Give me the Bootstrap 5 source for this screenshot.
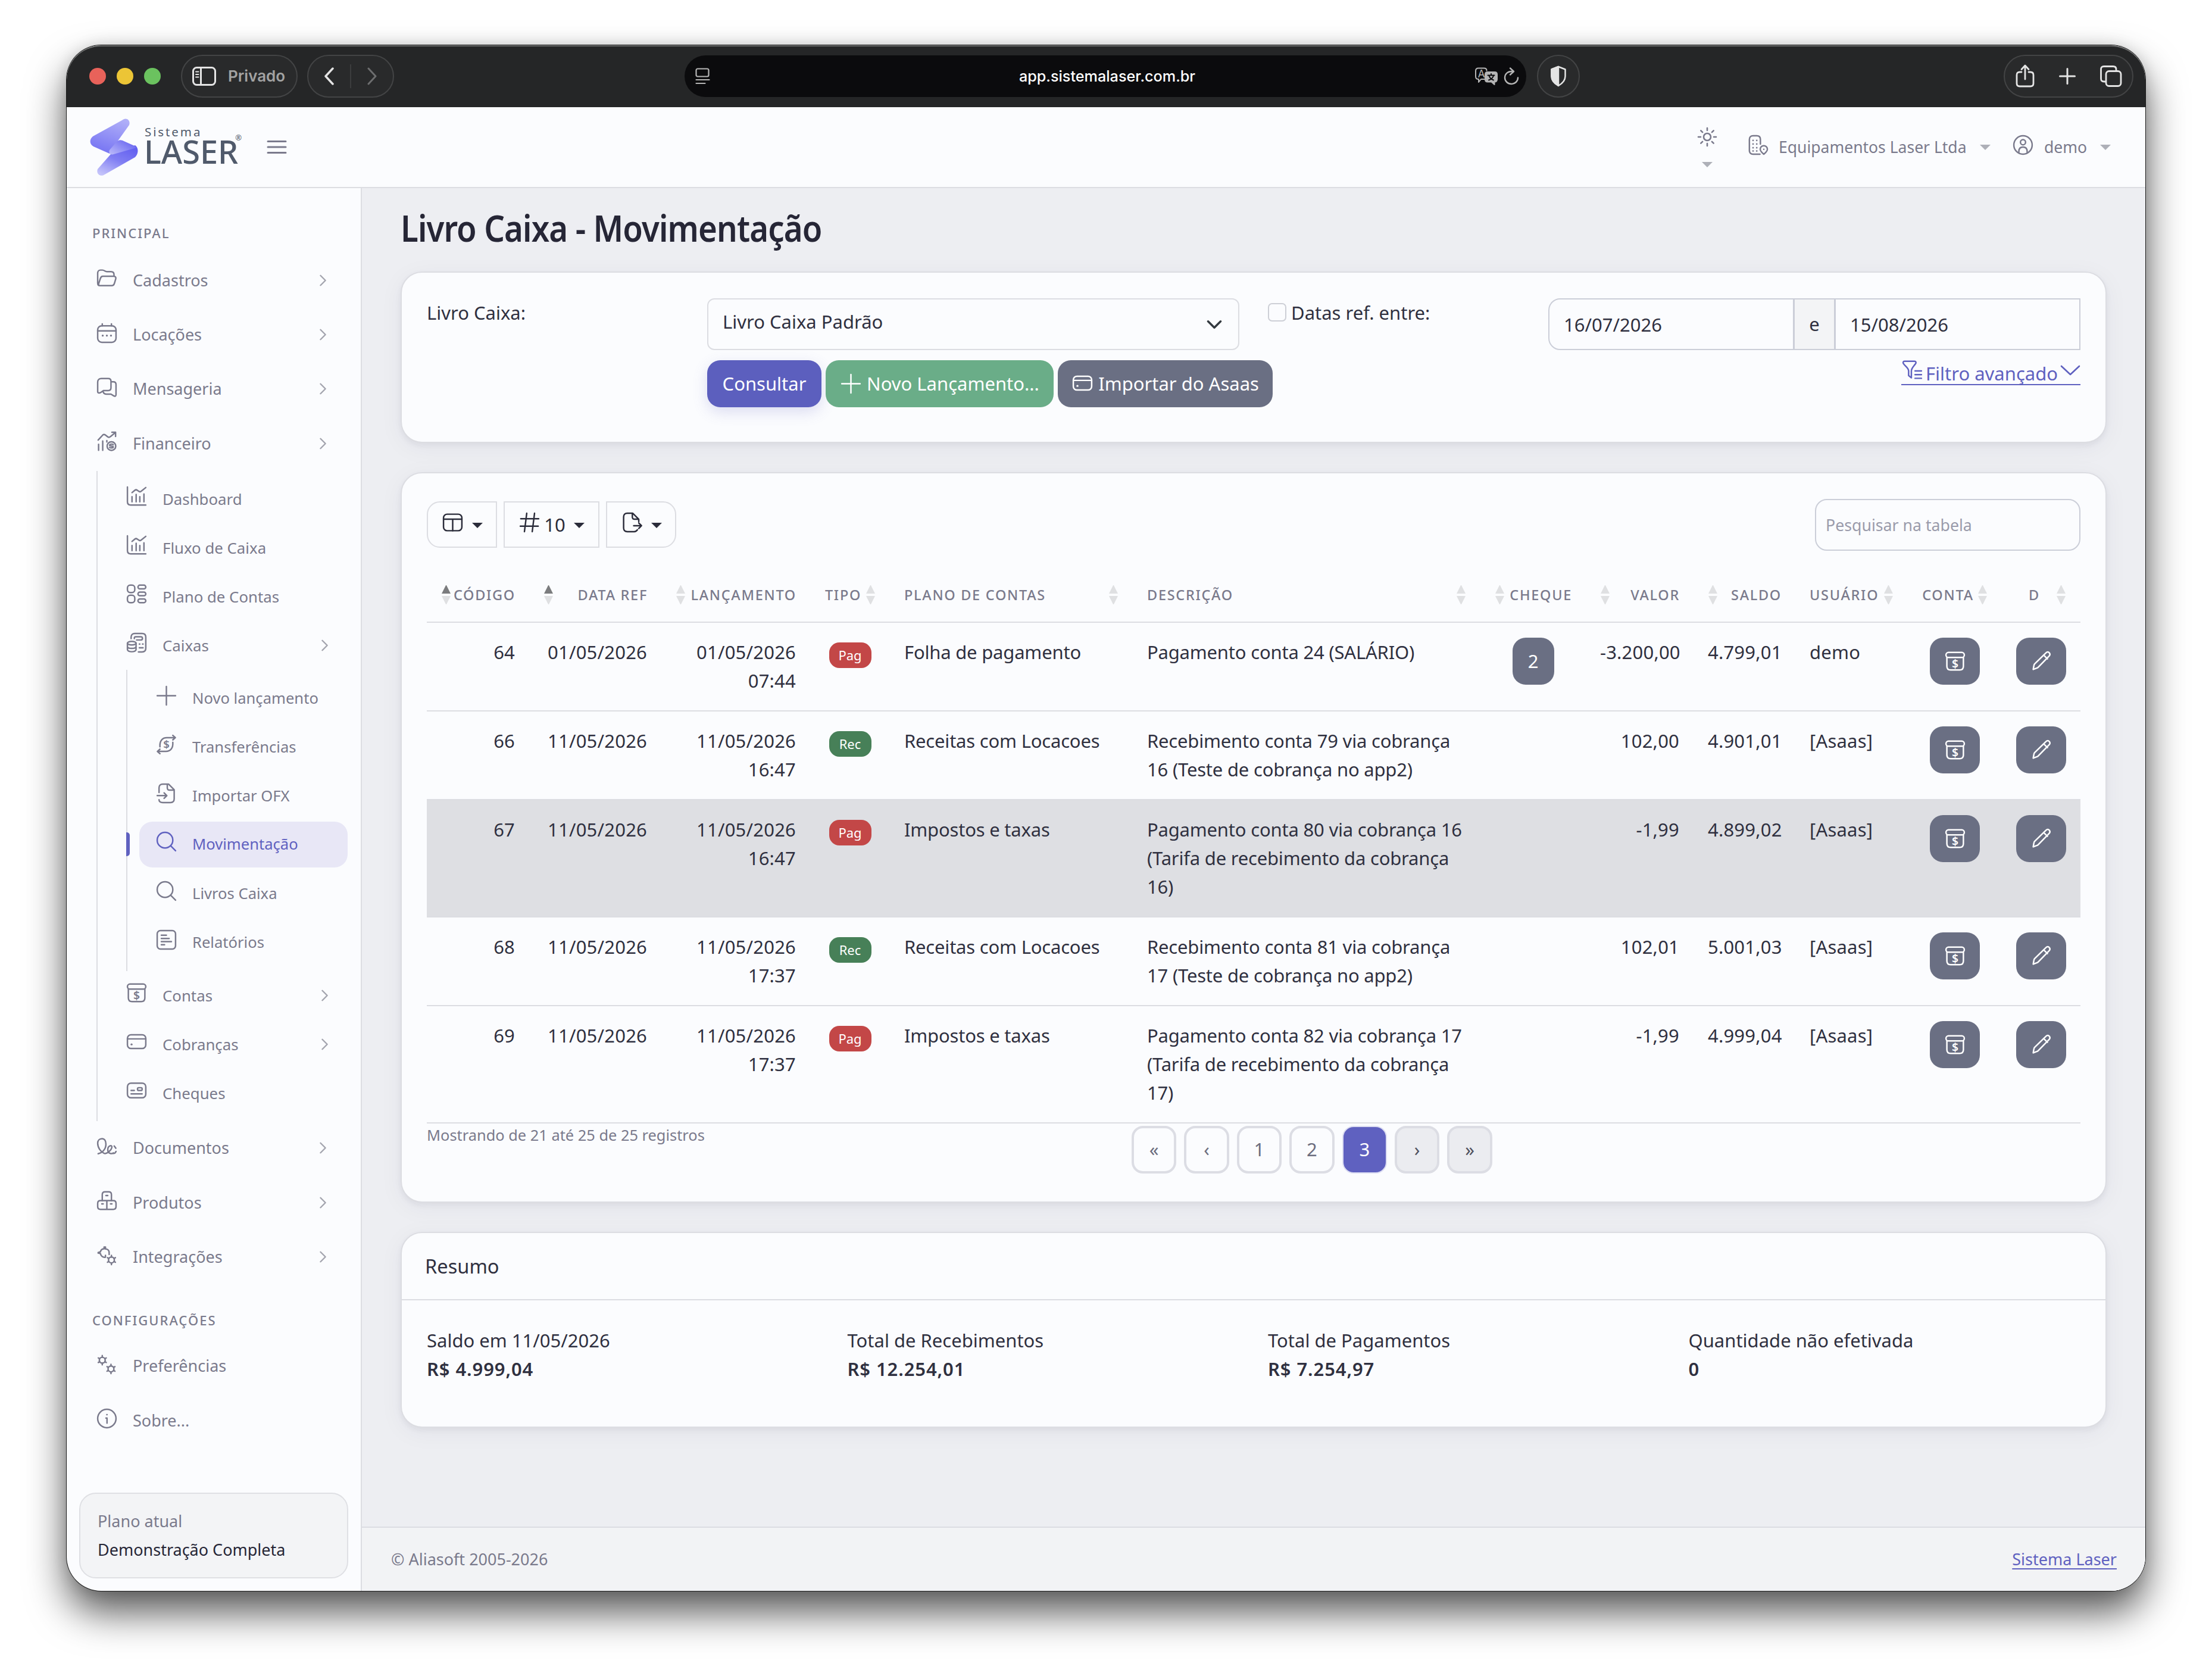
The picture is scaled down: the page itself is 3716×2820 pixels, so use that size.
<!DOCTYPE html>
<html lang="pt-BR">
<head>
    <meta charset="UTF-8">
    <meta name="viewport" content="width=device-width, initial-scale=1.0">
    <title>Livro Caixa - Movimentação</title>
    <link rel="stylesheet" href="https://cdn.jsdelivr.net/npm/bootstrap@5.3.2/dist/css/bootstrap.min.css">
    <style>
html {
    font-size: 32px;
}

body {
    --line: #dcdde2;
    --muted: #7a7a8c;
    --brand: #5f61c0;
    --surface: #fbfcfe;
    font-family: "Noto Sans", "Open Sans", sans-serif;
    font-size: 31px;
    line-height: 48px;
    color: #2f3040;
    background: #fff;
    height: 2820px;
    overflow: hidden;
}

svg {
    fill: none;
    stroke: currentColor;
    stroke-linecap: round;
    stroke-linejoin: round;
    flex: none;
}

svg text {
    fill: currentColor;
    stroke: none;
}

.ico {
    width: 37px;
    height: 37px;
    stroke-width: 1.6;
}

/* Browser window */
.window {
    width: 3492px;
    height: 2596px;
    margin: 76px 0 0 112px;
    border-radius: 58px;
    background: var(--surface);
    box-shadow: 0 0 0 1px #1a1a1a, 0 36px 66px rgba(0, 0, 0, .66), 0 0 24px rgba(0, 0, 0, .12);
}

.titlebar {
    height: 104px;
    padding: 0 20px 2px 38px;
    background: #252627;
    border-top: 2px solid #6c6d6d;
    border-radius: 58px 58px 0 0;
    font-family: Inter, sans-serif;
    font-size: 26px;
    color: #e4e4e4;
}

.light {
    width: 28px;
    height: 28px;
    border-radius: 50%;
    margin-right: 18px;
}

.pill {
    height: 72px;
    border: 2px solid #434445;
    border-radius: 36px;
    background: #292a2b;
}

.urlbar {
    width: 1414px;
    height: 70px;
    margin-left: 488px;
    padding: 0 11px 0 18px;
    border-radius: 35px;
    background: #0b0b0d;
    color: #b5b5b5;
}

.split-line {
    width: 2px;
    height: 40px;
    background: #3c3d3e;
}

/* App header */
.topnav {
    height: 136px;
    padding: 0 58px 0 39px;
    border-bottom: 2px solid var(--line);
    color: var(--muted);
    font-size: 26.5px;
}

.logo-text {
    color: #505a6b;
    line-height: 1;
}

.logo-small {
    font-size: 20.5px;
    letter-spacing: 2.9px;
    height: 20px;
    line-height: 20px;
    margin-left: -1px;
}

.logo-big {
    font-size: 54px;
    font-weight: 500;
    letter-spacing: 0;
    height: 46px;
    line-height: 46px;
    margin-left: -2px;
}

.tri {
    display: inline-block;
    border: 9px solid transparent;
    border-top: 9px solid #aeb0b8;
    border-bottom: 0;
}

/* Sidebar */
.sidebar {
    width: 496px;
    border-right: 2px solid var(--line);
    color: var(--muted);
    font-size: 27px;
    border-radius: 0 0 0 58px;
}

.side-title {
    padding-left: 43px;
    font-size: 22px;
    font-weight: 500;
    letter-spacing: 2px;
    line-height: 36px;
}

.side-link {
    height: 91.4px;
    padding: 0 52px 0 49px;
    gap: 25px;
}

.side-link .ico {
    margin-top: -6px;
}

.side-link .arrow {
    width: 22px;
    height: 22px;
    margin-left: auto;
    stroke-width: 2.6;
    color: #a3a4ae;
}

.side-sub {
    margin-left: 50px;
    padding: 6px 0;
    border-left: 2px solid var(--line);
    font-size: 25.8px;
}

.side-sub .side-link {
    height: 82px;
    padding: 0 49px 0 47px;
}

.side-sub .side-link .ico {
    margin-top: -9px;
}

.side-sub .side-sub {
    margin-left: 48px;
    padding: 7px 0;
    font-size: 25.6px;
}

.side-sub .side-link.active {
    position: relative;
    height: 77px;
    margin: 2px 22px 3px 20px;
    padding: 0 0 0 27px;
    border-radius: 22px;
    background: #e8e7f6;
    color: var(--brand);
}

.side-link.active::before {
    content: "";
    position: absolute;
    left: -22px;
    top: 18px;
    width: 6px;
    height: 40px;
    border-radius: 0 5px 5px 0;
    background: var(--brand);
}

.plan-box {
    margin: auto 21px 21px;
    height: 144px;
    padding: 22px 29px;
    border: 2px solid #dfe0e4;
    border-radius: 28px;
    background: #f3f4f6;
    font-size: 27px;
}

/* Content */
.content {
    background: #edeef2;
    border-radius: 0 0 58px 0;
}

.page-title {
    height: 140px;
    margin: 0;
    font-size: 61.5px;
    line-height: 133px;
    font-weight: 600;
    letter-spacing: -1px;
    color: #262636;
    transform: scaleX(.887);
    transform-origin: left;
}

.panel {
    background: var(--surface);
    border: 2px solid var(--line);
    border-radius: 36px;
    box-shadow: 0 4px 10px rgba(40, 40, 70, .06), 0 8px 40px rgba(40, 40, 70, .05);
    margin-bottom: 49px;
    color: inherit;
}

.panel .card-body {
    padding: 43px 42px;
}

.form-select,
.form-control,
.input-group-text {
    height: 87px;
    border: 2px solid #cbced8;
    background-color: var(--surface);
    color: #2f3040;
    font-size: 31px;
    padding: 0 24px;
    border-radius: 20px;
}

.form-select {
    border-color: var(--line);
    border-radius: 12px;
    padding-bottom: 8px;
    background-size: 28px 28px;
    background-position: right 26px center;
}

.input-group-text {
    background: #f3f4f6;
    width: 70px;
    justify-content: center;
    padding: 0;
}

.check-box {
    width: 31px;
    height: 31px;
    border: 2px solid #cdcfd6;
    border-radius: 7px;
    margin-right: 8px;
}

.btn {
    height: 79px;
    padding: 0 24px;
    font-size: 31px;
    border: 2px solid transparent;
    border-radius: 22px;
    color: #fff;
    display: inline-flex;
    align-items: center;
    justify-content: center;
    white-space: nowrap;
}

.btn-brand {
    background: #5c5fbe;
    box-shadow: 0 8px 24px rgba(95, 97, 192, .2);
}

.btn-new {
    background: #6aad88;
}

.btn-slate {
    background: #6a6f83;
}

.btn-tool {
    height: 78px;
    border-color: var(--line);
    color: #2b2c3a;
    border-radius: 0;
    padding: 0;
    gap: 14px;
}

.btn-tool .ico {
    margin-top: -7px;
}

.btn-tool .tri {
    border-top-color: #2b2c3a;
    margin-top: 2px;
}

.btn-row {
    width: 84px;
    padding: 0;
}

.filter-link {
    color: var(--brand);
    border-bottom: 2px solid var(--brand);
    line-height: 43px;
    height: 41px;
}

.search-box {
    width: 446px;
    font-size: 26.7px;
    padding: 0 16px;
}

.search-box::placeholder {
    color: #9a9bab;
}

/* Table */
.cash-table {
    table-layout: fixed;
    width: 2778px;
    margin: 0;
    color: inherit;
    --bs-table-bg: transparent;
    --bs-table-color: #2f3040;
}

.cash-table > thead > tr > th {
    position: relative;
    height: 89px;
    padding: 0 23px 2px 24px;
    font-size: 23.5px;
    font-weight: 500;
    letter-spacing: 1.7px;
    color: var(--muted);
    white-space: nowrap;
    vertical-align: middle;
    border-bottom: 2px solid var(--line);
}

.cash-table > tbody > tr > td {
    padding: 24.5px 24px 26.5px;
    border-bottom: 2px solid var(--line);
    vertical-align: top;
    white-space: nowrap;
    letter-spacing: .2px;
}

.cash-table > tbody > tr > td.words {
    letter-spacing: -.2px;
}

.cash-table > tbody > tr.picked > td {
    background: #dedfe3;
}

.cash-table th.mid {
    padding-right: 47px !important;
    text-align: center;
}

.cash-table .btn {
    margin: 0 0 -31px;
    vertical-align: top;
}

.cash-table .btn-cell {
    padding-left: 0 !important;
    padding-right: 0 !important;
}

.sort {
    position: absolute;
    top: 27px;
    right: 25px;
    width: 15px;
    height: 32px;
}

.text-end .sort {
    right: auto;
    left: 25px;
}

.sort::before,
.sort::after {
    content: "";
    display: block;
    border: 7.5px solid transparent;
}

.sort::before {
    border-top: 0;
    border-bottom: 14px solid #dfe0e2;
    margin-bottom: 4px;
}

.sort::after {
    border-bottom: 0;
    border-top: 14px solid #dfe0e2;
}

.sort.up::before {
    border-bottom-color: #7b7c7e;
}

.tag {
    display: block;
    width: 71px;
    height: 43px;
    margin: 8px auto 0;
    border-radius: 17px;
    font-size: 22px;
    line-height: 43px;
    letter-spacing: 0;
    color: #fff;
}

.tag-pag {
    background: #c34747;
}

.tag-rec {
    background: #478058;
}

.info {
    width: 1184px;
    font-size: 25.4px;
    line-height: 39px;
    color: var(--muted);
}

.pager {
    gap: 13px;
    margin: 4px 0 0;
    padding: 0;
    list-style: none;
}

.pager li {
    width: 75.4px;
    height: 80px;
    border: 4px solid #dcdde4;
    border-radius: 19px;
    line-height: 71px;
    text-align: center;
    color: #6c6e7f;
}

.pager li.on {
    background: #5f61c0;
    border: 2px solid #dcddf2;
    line-height: 75px;
    color: #fff;
}

.pager li.off {
    background: #ebecf0;
    color: #50525f;
}

.sum-head {
    height: 113px;
    line-height: 112px;
    padding: 0 39px;
    font-size: 32.6px;
    border-bottom: 2px solid var(--line);
}

.sum-value {
    font-weight: 600;
    letter-spacing: .9px;
}

.foot {
    height: 108px;
    padding: 0 48px 1px 49px;
    border-top: 2px solid var(--line);
    border-radius: 0 0 58px 0;
    background: #f2f3f5;
    font-size: 27px;
    color: var(--muted);
}

.foot a {
    color: var(--brand);
    text-underline-offset: 5px;
}
    </style>
</head>
<body>

<svg class="d-none">
    <symbol id="i-folder" viewBox="0 0 24 24"><path d="M4.500 20C3 20 2 19 2 17V6.500C2 4.500 3 3 5 3h2.200c2.300 0 2.600 1.700 4.800 1.700h4.500c2 0 3.300 1.300 3.300 3.300v1.700M7.500 9.700h12c1.800 0 2.700 1.200 2.200 2.900l-1.500 5C19.700 19.200 19 20 17.200 20H4.500c-1.500 0-1.800-1.200-1.300-2.500l1.800-5.500c.5-1.500 1.200-2.300 2.500-2.300z"/></symbol>
    <symbol id="i-calendar" viewBox="0 0 24 24"><rect x="2" y="4" width="20" height="18" rx="4.500"/><path d="M2 9.500h20M7 2v2M17 2v2"/><path stroke-width="2.200" d="M7.500 14.700h.01M12 14.700h.01M16.500 14.700h.01"/></symbol>
    <symbol id="i-chat" viewBox="0 0 24 24"><path d="M6 2.500h7.500c2 0 3 1 3 3v7c0 2-1 3-3 3H8.500L5.500 17.500c-1.500 1-3.500 1-3.500-1v-10c0-2.500 1.500-4 4-4zM16.500 6H19c2 0 3 1 3 3v11c0 1.800-1.200 2-2.500 1.300L16.500 19.500H11.500c-2 0-3-.8-3.500-2.500"/></symbol>
    <symbol id="i-finance" viewBox="0 0 24 24"><path d="M3 15v6.500M7.500 11.500v10M12 11v1.500M2.500 10.500l5-5.500c1-1 2-.8 3 0l2.500 2c1 .8 2 .6 3-.4L21 2.500M17.500 2H21.500v4.500"/><circle cx="17" cy="17" r="4.700"/><path d="M19 15.500c-1-.8-4-.7-4 .5s4 .8 4 2-3 1.300-4 .5"/></symbol>
    <symbol id="i-chart" viewBox="0 0 24 24"><path d="M2 2v16c0 2.500 1 3.500 3.500 3.500H22M7 12.500v5.500M11.500 10v8M15.500 12.500v5.500M20 9.500v8.500M7 8l3-2.500c1-.8 1.800-.8 2.800 0l1.700 1.200c.8.600 1.500.6 2.300 0L22 2.500"/></symbol>
    <symbol id="i-grid" viewBox="0 0 24 24"><rect x="2" y="2.500" width="8" height="8" rx="3"/><rect x="2" y="13.500" width="8" height="8" rx="3"/><rect x="13.500" y="2.500" width="8.500" height="4" rx="2"/><rect x="13.500" y="10" width="8.500" height="4" rx="2"/><rect x="13.500" y="17.500" width="8.500" height="4" rx="2"/></symbol>
    <symbol id="i-coins" viewBox="0 0 24 24"><path d="M6 7.500V6c0-2.500 1.500-4 4-4h8c2.500 0 4 1.500 4 4v12c0 2.500-1.500 4-4 4h-4M9.500 7.500V7c0-1 .5-1.500 1.500-1.500h5.500c2.500 0 2.500 3.500 0 3.500H12M15 13.500h.5M18.500 13.500h.5M15 17.500h4"/><ellipse cx="6.700" cy="12.500" rx="4.700" ry="2"/><path d="M2 12.500v7c0 1.300 2 2.300 4.700 2.300s4.700-1 4.700-2.300v-7M2 16c0 1.300 2 2.200 4.700 2.200s4.700-.9 4.700-2.200"/></symbol>
    <symbol id="i-plus" viewBox="0 0 24 24"><path d="M12 2v20M2 12h20"/></symbol>
    <symbol id="i-transfer" viewBox="0 0 24 24"><path d="M5 14.500C4.500 8 7.500 4.500 12.500 4.500H21.500M19 2l2.800 2.500L19 7M19 9.500c.5 6.500-2.500 10-7.500 10H2.500M5 17l-2.800 2.500L5 22"/><text x="12" y="16.300" font-size="12" font-weight="600" text-anchor="middle">$</text></symbol>
    <symbol id="i-import" viewBox="0 0 24 24"><path d="M4 11V6c0-2.500 1.500-4 4-4h6.500L20.500 8v10c0 2.500-1.500 4-4 4H8c-2.500 0-4-1-4-3M13 2.500V6c0 1.500 1 2.500 2.500 2.500h4.500M2 14.500h10M9.500 11.500l3 3-3 3"/></symbol>
    <symbol id="i-search" viewBox="0 0 24 24"><circle cx="10.500" cy="10.500" r="8.500"/><path d="M16.700 16.700L22 22"/></symbol>
    <symbol id="i-report" viewBox="0 0 24 24"><rect x="2" y="2" width="20" height="20" rx="3.500"/><path d="M6.500 7h5.500M6.500 10.500h8.500M6.500 14h11M6.500 17.300h3.500"/></symbol>
    <symbol id="i-account" viewBox="0 0 24 24"><rect x="2" y="2.500" width="20" height="5.500" rx="2.700"/><path d="M3 8v9.500c0 2.500 1.500 4 4 4h10c2.500 0 4-1.500 4-4V8"/><text x="12" y="19.300" font-size="12.500" font-weight="600" text-anchor="middle">$</text></symbol>
    <symbol id="i-card" viewBox="0 0 24 24"><rect x="2" y="4.500" width="20" height="15" rx="4"/><path d="M2 9h20"/><path stroke-width="2.200" d="M6.500 15h.01"/></symbol>
    <symbol id="i-cheque" viewBox="0 0 24 24"><rect x="2" y="4" width="20" height="16" rx="4"/><path d="M6 12h3.500M6 15.700h12"/><rect x="13" y="9" width="5" height="3" rx="1.200"/></symbol>
    <symbol id="i-sign" viewBox="0 0 24 24"><path d="M2.500 20c5-1 8.500-5.500 8.500-10.500C11 6 9.500 3.500 6.700 3.500S2 5.500 2 8.500c0 5 3.500 9.500 7 11 3 1.300 8.500-4 8.500-7 0-2.500-4.500-1.500-4.500 3 0 4.500 4.500 5 6 3.500M20 11.500l1.800 2.500M22 17.500c-.5 1.500-1.500 2.200-3 2.200"/></symbol>
    <symbol id="i-boxes" viewBox="0 0 24 24"><path d="M7 12V5.500C7 3.500 8 2.500 10 2.500h4c2 0 3 1 3 3V12"/><path d="M5 12h14c2 0 3 1 3 3v3.500c0 2-1 3-3 3H5c-2 0-3-1-3-3V15c0-2 1-3 3-3zM12 12v9.500M11 6.500h2M6.500 15.500h1.500M16 15.500h1.500"/></symbol>
    <symbol id="i-integr" viewBox="0 0 24 24"><path d="M2.500 8.800l2.500-.7c.5-2 2-3.200 4-3.200V2.900h1.500V5c2 0 4 1.200 4 4v2M2.500 9.500L5 10c.5 3 3 4.500 5.500 4v-2"/><use href="#gear" x="5" y="5"/></symbol>
    <symbol id="i-gears" viewBox="0 0 24 24"><use href="#gear" x="-5" y="-4.500"/><use href="#gear" x="4.500" y="5"/></symbol>
    <g id="gear"><circle cx="12" cy="12" r="3.200"/><path d="M12 8.800V7M12 17v-1.800M9.200 10.400L7.700 9.500M16.300 14.500l-1.500-.9M14.800 10.400l1.500-.9M7.700 14.500l1.500-.9"/></g>
    <symbol id="i-info" viewBox="0 0 24 24"><circle cx="12" cy="12" r="10"/><path d="M11 11.500h1.200V17M12 7.800h.2"/></symbol>
    <symbol id="i-right" viewBox="0 0 24 24"><path d="M7 3l9 9-9 9"/></symbol>
    <symbol id="i-pencil" viewBox="0 0 24 24"><path d="M3 21l.8-4.500c.1-.7.4-1.200.9-1.700L17 2.800c1.200-1.100 2.600-1 3.500 0s1 2.300 0 3.400L8.500 18.500c-.5.500-1 .8-1.700 1zM14.500 5.500l4 4"/></symbol>
    <symbol id="i-table" viewBox="0 0 24 24"><rect x="2" y="3" width="20" height="18" rx="4"/><path d="M2 8.500h20M12 8.500v12.500"/></symbol>
    <symbol id="i-hash" viewBox="0 0 24 24"><path d="M9 2L6.500 22M17.500 2L15 22M2.500 8h19.500M2 16h19.500"/></symbol>
    <symbol id="i-export" viewBox="0 0 24 24"><path d="M18 20c-.8 1.300-2 2-3.500 2H7c-2.500 0-4-1.500-4-4V6c0-2.500 1.500-4 4-4h6l6.500 6.500V11M12.500 2.500V6c0 1.500 1 2.500 2.500 2.500h4M14 15.500h8M19.500 12.500l3 3-3 3"/></symbol>
    <symbol id="i-filter" viewBox="0 0 24 24"><path d="M3.500 2.500h11c1.500 0 2 1.500 1 2.700C13 8.500 11 10 11 13v7.500l-3-2.500v-5C8 10 5 8.500 2.500 5.200c-1-1.200-.5-2.700 1-2.700zM15 13h7M15 17h7M15 21h7"/></symbol>
</svg>

<div class="window d-flex flex-column">
    <div class="titlebar d-flex align-items-center">
        <span class="light" style="background:#e8625a"></span>
        <span class="light" style="background:#ecc536"></span>
        <span class="light" style="background:#6bc25f"></span>
        <div class="pill d-flex align-items-center" style="width:196px;margin-left:16px;padding-left:17px;gap:20px">
            <svg width="40" height="32" viewBox="0 0 40 32" stroke-width="3"><rect x="1.500" y="1.500" width="37" height="29" rx="6"/><path d="M14.500 2v28"/><path stroke-width="2" d="M6 8.500h4.500M6 13h4.500M6 17.500h4.500"/></svg>
            <span class="fw-semibold" style="color:#a2a2a2">Privado</span>
        </div>
        <div class="pill d-flex align-items-center justify-content-between" style="width:146px;margin-left:16px;padding:0 26px">
            <svg width="18" height="30" viewBox="0 0 18 30" stroke-width="3.500"><path d="M15 2L3 15l12 13"/></svg>
            <span class="split-line"></span>
            <svg width="18" height="30" viewBox="0 0 18 30" stroke-width="3" color="#6d6e6f"><path d="M3 2l12 13L3 28"/></svg>
        </div>
        <div class="urlbar d-flex align-items-center justify-content-between">
            <svg width="25" height="28" viewBox="0 0 25 28" stroke-width="2.200"><rect x="1.500" y="1.500" width="21" height="13" rx="2.500"/><path d="M1.500 20h22M1.500 26h15"/></svg>
            <span class="fw-medium text-white" style="margin-left:50px;font-size:25.200px">app.sistemalaser.com.br</span>
            <span class="d-flex" style="gap:9px">
                <svg width="40" height="32" viewBox="0 0 40 32" stroke-width="2"><path d="M17 21H11l-4 5v-5c-3 0-5-1.500-5-4.500V7c0-3 1.500-4.500 4.500-4.500H16c3 0 4.500 1.500 4.500 4"/><text x="11.500" y="18" font-size="17" text-anchor="middle">A</text><path fill="currentColor" d="M22 9h12c3 0 4 1.500 4 4v8c0 3-1.500 4.500-4.500 4.500V30l-5-4.500H22c-3 0-4-1.500-4-4V13c0-2.500 1-4 4-4z"/><path stroke="#0b0b0d" d="M22.500 14.500h11M28 12v2.500M32 15c-1 3.500-4.500 6.500-8 7.500M24.500 15c1 3.500 4 6.500 7.500 7.500"/></svg>
                <svg width="27" height="32" viewBox="0 0 27 32" stroke-width="2.400"><path d="M13 8c-6.500 0-11 4.500-11 10.500S7 29 13 29s11-4.500 11-10.500M13 8h3M11 2.500l6 5.500-6 5.500"/></svg>
            </span>
        </div>
        <div class="pill d-flex align-items-center justify-content-center" style="width:72px;margin-left:18px">
            <svg width="30" height="36" viewBox="0 0 30 36" stroke-width="2.500"><path d="M15 2l11.500 4.500V18c0 7-4.500 12-11.500 16C8 30 3.500 25 3.500 18V6.500z"/><path fill="currentColor" d="M15 2v32C8 30 3.500 25 3.500 18V6.500z"/></svg>
        </div>
        <div class="pill d-flex align-items-center justify-content-between ms-auto" style="width:218px;padding:0 17px 0 18px">
            <svg width="32" height="40" viewBox="0 0 32 40" stroke-width="2.800"><path d="M10 13H7c-3.500 0-5 1.500-5 5v14c0 3.500 1.500 5 5 5h18c3.500 0 5-1.500 5-5V18c0-3.500-1.500-5-5-5h-3M16 25V3M10 8.500L16 2l6 6.500"/></svg>
            <svg width="28" height="28" viewBox="0 0 28 28" stroke-width="3"><path d="M14 1.500v25M1.500 14h25"/></svg>
            <svg width="38" height="38" viewBox="0 0 38 38" stroke-width="2.800"><rect x="11" y="10.500" width="25" height="25" rx="5"/><path d="M10 28H7.500C4 28 2.500 26.500 2.500 23V7.500C2.500 4 4 2.500 7.500 2.500H23C26.500 2.500 28 4 28 7.500V9"/></svg>
        </div>
    </div>

    <header class="topnav d-flex align-items-center">
        <svg width="82" height="98" viewBox="0 0 82 98" stroke="none">
            <defs>
                <linearGradient id="g1" x1=".7" y1="0" x2=".3" y2="1"><stop offset="0" stop-color="#afaef8"/><stop offset="1" stop-color="#7573f3"/></linearGradient>
                <linearGradient id="g2" x1=".8" y1="0" x2=".2" y2="1"><stop offset="0" stop-color="#615ef0"/><stop offset=".5" stop-color="#817ff3"/><stop offset="1" stop-color="#c3c2fa"/></linearGradient>
                <linearGradient id="g3" x1="1" y1="0" x2="0" y2=".8"><stop offset="0" stop-color="#5d5aef"/><stop offset="1" stop-color="#b4b3f9"/></linearGradient>
            </defs>
            <path fill="url(#g2)" stroke="none" d="M35 61L76 46c6 4 6 14 0 20L25 95c-7 5-15-1-12-9z"/>
            <path fill="url(#g1)" stroke="none" d="M54 4c6-6 15-1 12 8L46 40 33 60 6 48c-7-4-7-12-1-17z"/>
            <path fill="url(#g3)" stroke="none" d="M45 40c4-4 8-3 12-1l18 8c3 2 3 3 0 4L40 61c-6 2-9-2-7-7z"/>
        </svg>
        <div class="logo-text d-flex" style="margin-left:11px;width:162px;margin-top:-6px">
            <div>
                <div class="logo-small">Sistema</div>
                <div class="logo-big">LASER</div>
            </div>
            <span style="font-size:13px;margin:14px 0 0 -5px">®</span>
        </div>
        <svg width="34" height="24" viewBox="0 0 34 24" stroke-width="3" style="margin-left:42px"><path d="M2 2.500h30M2 12h30M2 21.500h30"/></svg>

        <div class="ms-auto d-flex align-items-center">
            <div class="d-flex flex-column align-items-center" style="gap:25px;margin-right:50px">
                <svg width="34" height="34" viewBox="0 0 34 34" stroke-width="2.600"><circle cx="17" cy="17" r="6"/><path d="M17 2v4M17 28v4M2 17h4M28 17h4M6.300 6.300l2.800 2.800M24.900 24.900l2.800 2.800M6.300 27.700l2.800-2.800M24.900 9.100l2.800-2.800"/></svg>
                <span class="tri"></span>
            </div>
            <svg class="ico" viewBox="0 0 24 24" style="margin-top:-8px"><path d="M14 22H6.500C4 22 2.500 20.500 2.500 18V6C2.500 3.500 4 2 6.500 2h4c2.500 0 4 1.500 4 4v5"/><path stroke-width="1.800" d="M6.500 7h.01M10.500 7h.01M6.500 11h.01M10.500 11h.01M6.500 15h.01M10.500 15h.01M6.500 18.500h.01M10.500 18.500h.01"/><path d="M18.200 22c-2.500-2-3.900-3.500-3.900-5.300a3.900 3.900 0 0 1 7.800 0c0 1.800-1.400 3.300-3.900 5.300zM18.200 16.700h.01"/></svg>
            <span style="margin-left:16px;width:316px;white-space:nowrap">Equipamentos Laser Ltda</span>
            <span class="tri" style="margin-left:22px"></span>
            <svg class="ico" viewBox="0 0 24 24" style="margin:-8px 0 0 36px"><circle cx="12" cy="12" r="10"/><circle cx="12" cy="9" r="2.800"/><path d="M7.500 20v-1c0-3 1.500-4.700 4.500-4.700s4.500 1.700 4.500 4.700v1"/></svg>
            <span style="margin-left:17px;width:74px">demo</span>
            <span class="tri" style="margin-left:20px"></span>
        </div>
    </header>

    <div class="d-flex flex-grow-1">
        <nav class="sidebar d-flex flex-column">
            <div class="side-title" style="margin:57px 0 16px">PRINCIPAL</div>
            <div class="side-link d-flex align-items-center"><svg class="ico"><use href="#i-folder"/></svg>Cadastros<svg class="arrow"><use href="#i-right"/></svg></div>
            <div class="side-link d-flex align-items-center"><svg class="ico"><use href="#i-calendar"/></svg>Locações<svg class="arrow"><use href="#i-right"/></svg></div>
            <div class="side-link d-flex align-items-center"><svg class="ico"><use href="#i-chat"/></svg>Mensageria<svg class="arrow"><use href="#i-right"/></svg></div>
            <div class="side-link d-flex align-items-center"><svg class="ico"><use href="#i-finance"/></svg>Financeiro<svg class="arrow"><use href="#i-right"/></svg></div>
            <div class="side-sub">
                <div class="side-link d-flex align-items-center"><svg class="ico"><use href="#i-chart"/></svg>Dashboard</div>
                <div class="side-link d-flex align-items-center"><svg class="ico"><use href="#i-chart"/></svg>Fluxo de Caixa</div>
                <div class="side-link d-flex align-items-center"><svg class="ico"><use href="#i-grid"/></svg>Plano de Contas</div>
                <div class="side-link d-flex align-items-center"><svg class="ico"><use href="#i-coins"/></svg>Caixas<svg class="arrow"><use href="#i-right"/></svg></div>
                <div class="side-sub">
                    <div class="side-link d-flex align-items-center pe-0"><svg class="ico"><use href="#i-plus"/></svg>Novo lançamento</div>
                    <div class="side-link d-flex align-items-center"><svg class="ico"><use href="#i-transfer"/></svg>Transferências</div>
                    <div class="side-link d-flex align-items-center"><svg class="ico"><use href="#i-import"/></svg>Importar OFX</div>
                    <div class="side-link active d-flex align-items-center"><svg class="ico"><use href="#i-search"/></svg>Movimentação</div>
                    <div class="side-link d-flex align-items-center"><svg class="ico"><use href="#i-search"/></svg>Livros Caixa</div>
                    <div class="side-link d-flex align-items-center"><svg class="ico"><use href="#i-report"/></svg>Relatórios</div>
                </div>
                <div class="side-link d-flex align-items-center"><svg class="ico"><use href="#i-account"/></svg>Contas<svg class="arrow"><use href="#i-right"/></svg></div>
                <div class="side-link d-flex align-items-center"><svg class="ico"><use href="#i-card"/></svg>Cobranças<svg class="arrow"><use href="#i-right"/></svg></div>
                <div class="side-link d-flex align-items-center"><svg class="ico"><use href="#i-cheque"/></svg>Cheques</div>
            </div>
            <div class="side-link d-flex align-items-center"><svg class="ico"><use href="#i-sign"/></svg>Documentos<svg class="arrow"><use href="#i-right"/></svg></div>
            <div class="side-link d-flex align-items-center"><svg class="ico"><use href="#i-boxes"/></svg>Produtos<svg class="arrow"><use href="#i-right"/></svg></div>
            <div class="side-link d-flex align-items-center"><svg class="ico"><use href="#i-integr"/></svg>Integrações<svg class="arrow"><use href="#i-right"/></svg></div>
            <div class="side-title" style="margin:42px 0 14px">CONFIGURAÇÕES</div>
            <div class="side-link d-flex align-items-center"><svg class="ico"><use href="#i-gears"/></svg>Preferências</div>
            <div class="side-link d-flex align-items-center"><svg class="ico"><use href="#i-info"/></svg>Sobre...</div>
            <div class="plan-box">
                <div>Plano atual</div>
                <div style="color:#262636">Demonstração Completa</div>
            </div>
        </nav>

        <main class="content flex-grow-1 d-flex flex-column">
            <div style="padding:0 65px">
                <h1 class="page-title">Livro Caixa - Movimentação</h1>

                <div class="card panel" style="height:288px">
                    <div class="card-body">
                        <div class="row">
                            <div class="col-2">Livro Caixa:</div>
                            <div class="col-4">
                                <select class="form-select"><option>Livro Caixa Padrão</option></select>
                            </div>
                            <div class="col-2 d-flex">
                                <span class="check-box" style="margin-top:8px"></span>Datas ref. entre:
                            </div>
                            <div class="col-4">
                                <div class="input-group flex-nowrap">
                                    <input type="text" class="form-control" value="16/07/2026">
                                    <span class="input-group-text">e</span>
                                    <input type="text" class="form-control rounded-0" value="15/08/2026">
                                </div>
                            </div>
                        </div>
                        <div class="row" style="margin-top:17px">
                            <div class="col-7 offset-2 d-flex" style="gap:7px">
                                <button class="btn btn-brand" style="width:192px">Consultar</button>
                                <button class="btn btn-new" style="width:383px;gap:8px"><svg class="ico"><use href="#i-plus"/></svg>Novo Lançamento...</button>
                                <button class="btn btn-slate" style="width:361px;gap:8px"><svg class="ico" style="margin-top:-2px"><use href="#i-card"/></svg>Importar do Asaas</button>
                            </div>
                            <div class="col-3 d-flex justify-content-end">
                                <span class="filter-link d-flex text-nowrap" style="gap:4px;margin-top:1px"><svg class="ico" style="margin-top:-3px"><use href="#i-filter"/></svg>Filtro avançado<svg width="34" height="20" viewBox="0 0 34 20" stroke-width="2.600" style="margin-top:7px"><path d="M2 2l15 14L32 2"/></svg></span>
                            </div>
                        </div>
                    </div>
                </div>

                <div class="card panel" style="height:1227px">
                    <div class="card-body">
                        <div class="d-flex justify-content-between" style="height:118px">
                            <div class="d-flex" style="gap:11px;margin-top:4px">
                                <button class="btn btn-tool" style="width:118px;border-radius:22px 0 0 22px"><svg class="ico"><use href="#i-table"/></svg><span class="tri"></span></button>
                                <button class="btn btn-tool" style="width:161px"><svg class="ico" style="margin-right:-8px"><use href="#i-hash"/></svg>10<span class="tri"></span></button>
                                <button class="btn btn-tool" style="width:118px;border-radius:0 22px 22px 0"><svg class="ico"><use href="#i-export"/></svg><span class="tri"></span></button>
                            </div>
                            <input type="text" class="form-control search-box" placeholder="Pesquisar na tabela">
                        </div>
                        <table class="table cash-table">
                            <colgroup>
                                <col style="width:172px"><col style="width:222px"><col style="width:250px"><col style="width:134px">
                                <col style="width:408px"><col style="width:584px"><col style="width:177px"><col style="width:181px">
                                <col style="width:171px"><col style="width:189px"><col style="width:158px"><col style="width:132px">
                            </colgroup>
                            <thead>
                                <tr>
                                    <th class="text-end">CÓDIGO<span class="sort up"></span></th>
                                    <th class="text-end">DATA REF<span class="sort up"></span></th>
                                    <th class="text-end">LANÇAMENTO<span class="sort"></span></th>
                                    <th class="mid">TIPO<span class="sort"></span></th>
                                    <th>PLANO DE CONTAS<span class="sort"></span></th>
                                    <th>DESCRIÇÃO<span class="sort"></span></th>
                                    <th class="text-end">CHEQUE<span class="sort"></span></th>
                                    <th class="text-end">VALOR<span class="sort"></span></th>
                                    <th class="text-end">SALDO<span class="sort"></span></th>
                                    <th>USUÁRIO<span class="sort"></span></th>
                                    <th class="mid">CONTA<span class="sort"></span></th>
                                    <th class="mid">D<span class="sort"></span></th>
                                </tr>
                            </thead>
                            <tbody id="rows"></tbody>
                        </table>
                        <div class="d-flex">
                            <div class="info">Mostrando de 21 até 25 de 25 registros</div>
                            <ul class="pager d-flex">
                                <li>«</li>
                                <li>‹</li>
                                <li>1</li>
                                <li>2</li>
                                <li class="on">3</li>
                                <li class="off">›</li>
                                <li class="off">»</li>
                            </ul>
                        </div>
                    </div>
                </div>

                <div class="card panel mb-0" style="height:329px">
                    <div class="sum-head">Resumo</div>
                    <div class="card-body">
                        <div class="row">
                            <div class="col-3">Saldo em 11/05/2026<div class="sum-value">R$ 4.999,04</div></div>
                            <div class="col-3">Total de Recebimentos<div class="sum-value">R$ 12.254,01</div></div>
                            <div class="col-3">Total de Pagamentos<div class="sum-value">R$ 7.254,97</div></div>
                            <div class="col-3">Quantidade não efetivada<div class="sum-value">0</div></div>
                        </div>
                    </div>
                </div>
            </div>
            <footer class="foot mt-auto d-flex align-items-center justify-content-between">
                <span>© Aliasoft 2005-2026</span>
                <a href="#">Sistema Laser</a>
            </footer>
        </main>
    </div>
</div>

<script src="https://cdn.jsdelivr.net/npm/bootstrap@5.3.2/dist/js/bootstrap.bundle.min.js"></script>
<script>
    const entries = [
        { code: 64, ref: '01/05/2026', time: '07:44', type: 'Pag', plan: 'Folha de pagamento', text: 'Pagamento conta 24 (SALÁRIO)', cheque: '2', value: '-3.200,00', balance: '4.799,01', user: 'demo' },
        { code: 66, ref: '11/05/2026', time: '16:47', type: 'Rec', plan: 'Receitas com Locacoes', text: 'Recebimento conta 79 via cobrança<br>16 (Teste de cobrança no app2)', value: '102,00', balance: '4.901,01', user: '[Asaas]' },
        { code: 67, ref: '11/05/2026', time: '16:47', type: 'Pag', plan: 'Impostos e taxas', text: 'Pagamento conta 80 via cobrança 16<br>(Tarifa de recebimento da cobrança<br>16)', value: '-1,99', balance: '4.899,02', user: '[Asaas]', picked: true },
        { code: 68, ref: '11/05/2026', time: '17:37', type: 'Rec', plan: 'Receitas com Locacoes', text: 'Recebimento conta 81 via cobrança<br>17 (Teste de cobrança no app2)', value: '102,01', balance: '5.001,03', user: '[Asaas]' },
        { code: 69, ref: '11/05/2026', time: '17:37', type: 'Pag', plan: 'Impostos e taxas', text: 'Pagamento conta 82 via cobrança 17<br>(Tarifa de recebimento da cobrança<br>17)', value: '-1,99', balance: '4.999,04', user: '[Asaas]' }
    ];

    document.getElementById('rows').innerHTML = entries.map(e => `
        <tr class="${e.picked ? 'picked' : ''}">
            <td class="text-end">${e.code}</td>
            <td class="text-end">${e.ref}</td>
            <td class="text-end">${e.ref}<br>${e.time}</td>
            <td class="text-center"><span class="tag tag-${e.type.toLowerCase()}">${e.type}</span></td>
            <td class="words">${e.plan}</td>
            <td class="words">${e.text}</td>
            <td class="text-center btn-cell">${e.cheque ? `<button class="btn btn-slate" style="width:70px;padding:0">${e.cheque}</button>` : ''}</td>
            <td class="text-end">${e.value}</td>
            <td class="text-end">${e.balance}</td>
            <td>${e.user}</td>
            <td class="text-center btn-cell"><button class="btn btn-slate btn-row"><svg class="ico"><use href="#i-account"/></svg></button></td>
            <td class="text-center btn-cell"><button class="btn btn-slate btn-row"><svg class="ico"><use href="#i-pencil"/></svg></button></td>
        </tr>
    `).join('');
</script>

</body>
</html>
